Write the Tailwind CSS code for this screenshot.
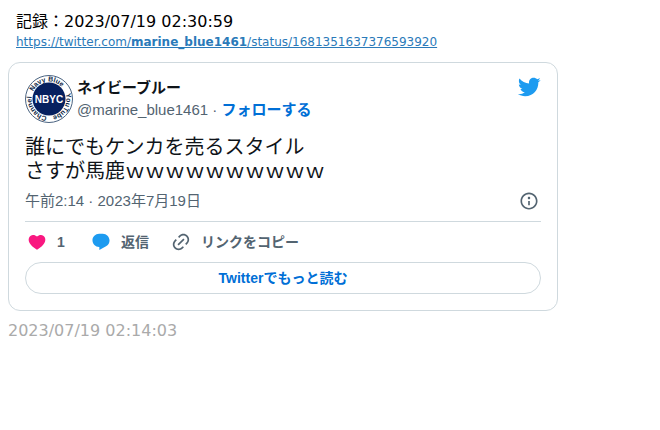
<!DOCTYPE html>
<html lang="ja">
<head>
  <meta charset="UTF-8" />
  <meta name="viewport" content="width=device-width, initial-scale=1.0" />
  <title>記録：2023/07/19 02:30:59</title>
  <script src="https://cdn.jsdelivr.net/npm/@tailwindcss/browser@4"></script>
</head>
<body class="bg-white px-2 pt-2.5 font-['DejaVu_Sans','Noto_Sans_CJK_JP',sans-serif] text-black">
  <!-- RECORD HEADER -->
  <header class="px-2">
    <p class="text-base leading-6">記録：2023/07/19 02:30:59</p>
    <a href="#" class="block w-fit text-xs leading-4 text-[#2a7ab9] underline">https://twitter.com/<b>marine_blue1461</b>/status/1681351637376593920</a>
  </header>

  <!-- TWEET CARD -->
  <article class="mt-3 max-w-[550px] rounded-xl border border-[#cfd9de] px-4 pt-3 pb-4 font-['Liberation_Sans','Noto_Sans_CJK_JP',sans-serif] text-[#0f1419]">
    <div class="flex items-start">
      <svg class="size-12 shrink-0" viewBox="0 0 48 48" role="img" aria-label="NBYC">
        <defs>
          <path id="ring" d="M24 41.5a17.5 17.5 0 1 1 .01 0" />
        </defs>
        <circle cx="24" cy="24" r="23.5" fill="#fff" stroke="#4a6380" stroke-width="1" />
        <circle cx="24" cy="24" r="16.5" fill="#06205f" />
        <g class="font-['Liberation_Sans',sans-serif] text-[7px] font-bold" fill="#0b1f45">
          <text><textPath href="#ring" startOffset="2">Channel</textPath></text>
          <text><textPath href="#ring" startOffset="35">Navy Blue</textPath></text>
          <text><textPath href="#ring" startOffset="77">YouTube</textPath></text>
        </g>
        <text x="24" y="28" text-anchor="middle" class="font-['Liberation_Sans',sans-serif] text-[10px] font-bold" fill="#fff">NBYC</text>
      </svg>
      <div class="ml-1 grow pt-px text-[15px]">
        <p class="leading-6 font-bold">ネイビーブルー</p>
        <p class="leading-5 text-[#536471]">@marine_blue1461 · <a href="#" class="font-bold text-[#006fd6]">フォローする</a></p>
      </div>
      <a href="#" aria-label="Twitter">
        <svg class="size-6" viewBox="0 0 24 24" fill="#1d9bf0"><path d="M23.643 4.937c-.835.37-1.732.62-2.675.733.962-.576 1.7-1.49 2.048-2.578-.9.534-1.897.922-2.958 1.13-.85-.904-2.06-1.47-3.4-1.47-2.572 0-4.658 2.086-4.658 4.66 0 .364.042.718.12 1.06-3.873-.195-7.304-2.05-9.602-4.868-.4.69-.63 1.49-.63 2.342 0 1.616.823 3.043 2.072 3.878-.764-.025-1.482-.234-2.11-.583v.06c0 2.257 1.605 4.14 3.737 4.568-.392.106-.803.162-1.227.162-.3 0-.593-.028-.877-.082.593 1.85 2.313 3.198 4.352 3.234-1.595 1.25-3.604 1.995-5.786 1.995-.376 0-.747-.022-1.112-.065 2.062 1.323 4.51 2.093 7.14 2.093 8.57 0 13.255-7.098 13.255-13.254 0-.2-.005-.402-.014-.602.91-.658 1.7-1.477 2.323-2.41z" /></svg>
      </a>
    </div>

    <p class="mt-3 text-xl leading-6">誰にでもケンカを売るスタイル<br />さすが馬鹿ｗｗｗｗｗｗｗｗｗｗ</p>

    <div class="mt-2 flex items-center justify-between pr-0.5 text-[#536471]">
      <a href="#" class="text-[15px] leading-5">午前2:14 · 2023年7月19日</a>
      <button type="button" aria-label="Info">
        <svg class="size-5" viewBox="0 0 24 24" fill="currentColor"><path d="M13.5 8.5c0 .83-.67 1.5-1.5 1.5s-1.5-.67-1.5-1.5S11.17 7 12 7s1.5.67 1.5 1.5zM13 17v-5h-2v5h2zm-1 5.25c5.66 0 10.25-4.59 10.25-10.25S17.66 1.75 12 1.75 1.75 6.34 1.75 12 6.34 22.25 12 22.25zM20.25 12c0 4.56-3.69 8.25-8.25 8.25S3.75 16.56 3.75 12 7.44 3.75 12 3.75s8.25 3.69 8.25 8.25z" /></svg>
      </button>
    </div>

    <!-- ACTIONS -->
    <div class="mt-2.5 flex gap-[22px] border-t border-[#cfd9de] px-0.5 py-2.5 text-sm leading-5 font-bold text-[#536471]">
      <button type="button" class="flex items-center gap-2.5">
        <svg class="size-5" viewBox="0 0 24 24" fill="#f91880"><path d="M20.884 13.19c-1.351 2.48-4.001 5.12-8.379 7.67l-.503.3-.504-.3c-4.379-2.55-7.029-5.19-8.382-7.67-1.36-2.5-1.41-4.86-.514-6.67.887-1.79 2.647-2.91 4.601-3.01 1.651-.09 3.368.56 4.798 2.01 1.429-1.45 3.146-2.1 4.796-2.01 1.954.1 3.714 1.22 4.601 3.01.896 1.81.846 4.17-.514 6.67z" /></svg>
        <span class="min-w-3 text-left">1</span>
      </button>
      <button type="button" class="flex items-center gap-2.5">
        <svg class="size-5" viewBox="0 0 24 24" fill="#1d9bf0"><path d="M1.751 10c0-4.42 3.584-8 8.005-8h4.366c4.49 0 8.129 3.64 8.129 8.13 0 2.96-1.607 5.68-4.196 7.11l-8.054 4.46v-3.69h-.067c-4.49.1-8.183-3.51-8.183-8.01z" /></svg>
        返信
      </button>
      <button type="button" class="flex items-center gap-2.5">
        <svg class="size-5" viewBox="0 0 24 24" fill="currentColor"><path d="M18.36 5.64c-1.95-1.96-5.11-1.96-7.07 0L9.88 7.05 8.46 5.64l1.42-1.42c2.73-2.73 7.16-2.73 9.9 0 2.73 2.74 2.73 7.17 0 9.9l-1.42 1.42-1.41-1.42 1.41-1.41c1.96-1.96 1.96-5.12 0-7.07zm-2.12 3.53l-7.07 7.07-1.41-1.41 7.07-7.07 1.41 1.41zm-12.02.71l1.42-1.42 1.41 1.42-1.41 1.41c-1.96 1.96-1.96 5.12 0 7.07 1.95 1.96 5.11 1.96 7.07 0l1.41-1.41 1.42 1.41-1.42 1.42c-2.73 2.73-7.16 2.73-9.9 0-2.73-2.74-2.73-7.17 0-9.9z" /></svg>
        リンクをコピー
      </button>
    </div>
    <button type="button" class="flex h-8 w-full items-center justify-center rounded-full border border-[#cfd9de] text-sm font-bold text-[#006fd6]">Twitterでもっと読む</button>
  </article>

  <p class="mt-2 text-base leading-6 text-[#aaa]">2023/07/19 02:14:03</p>
</body>
</html>
